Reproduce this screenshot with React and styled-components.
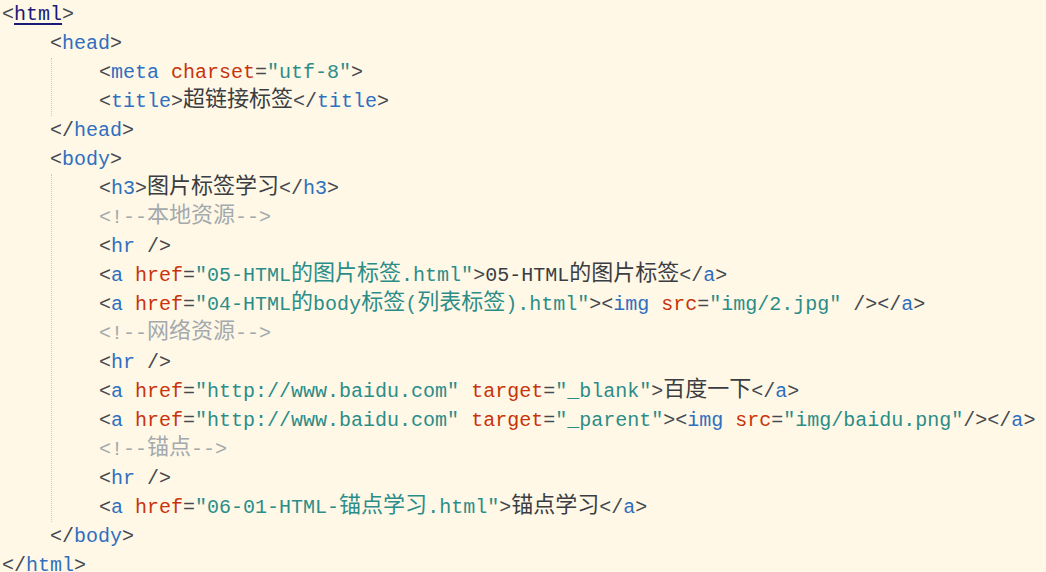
import React from "react";
import styled, { createGlobalStyle } from "styled-components";

const Global = createGlobalStyle`
  html, body {
    margin: 0;
    padding: 0;
    background: #fff8e7;
    overflow: hidden;
  }
`;

const Editor = styled.div`
  width: 1046px;
  height: 572px;
  box-sizing: border-box;
  padding: 0 0 0 2px;
  background: #fff8e7;
  font-family: "Liberation Mono", "DejaVu Sans Mono", monospace;
  font-size: 20px;
  color: #333;
  overflow: hidden;
`;

const Block = styled.div`
  margin-left: ${(p) => p.$guide}px;
  border-left: 1px dotted #c9c9c9;
  padding-left: ${(p) => 48 - 1}px;
`;

const Line = styled.div`
  height: 29px;
  line-height: 29px;
  white-space: pre;
  padding-left: ${(p) => (p.$indent || 0) * 48}px;
`;

const Br = styled.span`
  color: #45494f;
`;
const Tag = styled.span`
  color: #2f6fbf;
  ${(p) =>
    p.$root &&
    `
    color: #1a1a78;
    text-decoration: underline;
    text-underline-offset: 3px;
  `}
`;
const Attr = styled.span`
  color: #c8340a;
`;
const Eq = styled.span`
  color: #45494f;
`;
const Str = styled.span`
  color: #2b8d88;
`;
const Comment = styled.span`
  color: #a3a9ad;
`;
const Text = styled.span`
  color: #3a3d42;
`;
const Han = styled.span`
  font-family: "Noto Sans CJK SC", sans-serif;
  font-size: 22px;
  line-height: 0;
  position: relative;
  top: -1px;
`;

const cjk = /([\u3000-\u9fff\uff00-\uffef]+)/;
const T = ({ children }) =>
  String(children)
    .split(cjk)
    .map((part, i) =>
      cjk.test(part) ? <Han key={i}>{part}</Han> : part
    );

const Open = ({ name, root, children, selfClose }) => (
  <>
    <Br>&lt;</Br>
    <Tag $root={root}>{name}</Tag>
    {children}
    <Br>{selfClose ? selfClose : ">"}</Br>
  </>
);
const Close = ({ name }) => (
  <>
    <Br>&lt;/</Br>
    <Tag>{name}</Tag>
    <Br>&gt;</Br>
  </>
);
const A = ({ name, value, space = true }) => (
  <>
    {space ? " " : ""}
    <Attr>{name}</Attr>
    <Eq>=</Eq>
    <Str>
      <T>{`"${value}"`}</T>
    </Str>
  </>
);
const Cm = ({ children }) => (
  <Comment>
    <T>{`<!--${children}-->`}</T>
  </Comment>
);
const Tx = ({ children }) => (
  <Text>
    <T>{children}</T>
  </Text>
);

export default function App() {
  return (
    <>
      <Global />
      <Editor>
        <Line>
          <Open name="html" root />
        </Line>
        <Line $indent={1}>
          <Open name="head" />
        </Line>
        <Block $guide={49}>
          <Line>
            <Open name="meta">
              <A name="charset" value="utf-8" />
            </Open>
          </Line>
          <Line>
            <Open name="title" />
            <Tx>超链接标签</Tx>
            <Close name="title" />
          </Line>
        </Block>
        <Line $indent={1}>
          <Close name="head" />
        </Line>
        <Line $indent={1}>
          <Open name="body" />
        </Line>
        <Block $guide={49}>
          <Line>
            <Open name="h3" />
            <Tx>图片标签学习</Tx>
            <Close name="h3" />
          </Line>
          <Line>
            <Cm>本地资源</Cm>
          </Line>
          <Line>
            <Open name="hr" selfClose=" />" />
          </Line>
          <Line>
            <Open name="a">
              <A name="href" value="05-HTML的图片标签.html" />
            </Open>
            <Tx>05-HTML的图片标签</Tx>
            <Close name="a" />
          </Line>
          <Line>
            <Open name="a">
              <A name="href" value="04-HTML的body标签(列表标签).html" />
            </Open>
            <Open name="img" selfClose=" />">
              <A name="src" value="img/2.jpg" />
            </Open>
            <Close name="a" />
          </Line>
          <Line>
            <Cm>网络资源</Cm>
          </Line>
          <Line>
            <Open name="hr" selfClose=" />" />
          </Line>
          <Line>
            <Open name="a">
              <A name="href" value="http://www.baidu.com" />
              <A name="target" value="_blank" />
            </Open>
            <Tx>百度一下</Tx>
            <Close name="a" />
          </Line>
          <Line>
            <Open name="a">
              <A name="href" value="http://www.baidu.com" />
              <A name="target" value="_parent" />
            </Open>
            <Open name="img" selfClose="/>">
              <A name="src" value="img/baidu.png" />
            </Open>
            <Close name="a" />
          </Line>
          <Line>
            <Cm>锚点</Cm>
          </Line>
          <Line>
            <Open name="hr" selfClose=" />" />
          </Line>
          <Line>
            <Open name="a">
              <A name="href" value="06-01-HTML-锚点学习.html" />
            </Open>
            <Tx>锚点学习</Tx>
            <Close name="a" />
          </Line>
        </Block>
        <Line $indent={1}>
          <Close name="body" />
        </Line>
        <Line>
          <Close name="html" />
        </Line>
      </Editor>
    </>
  );
}
